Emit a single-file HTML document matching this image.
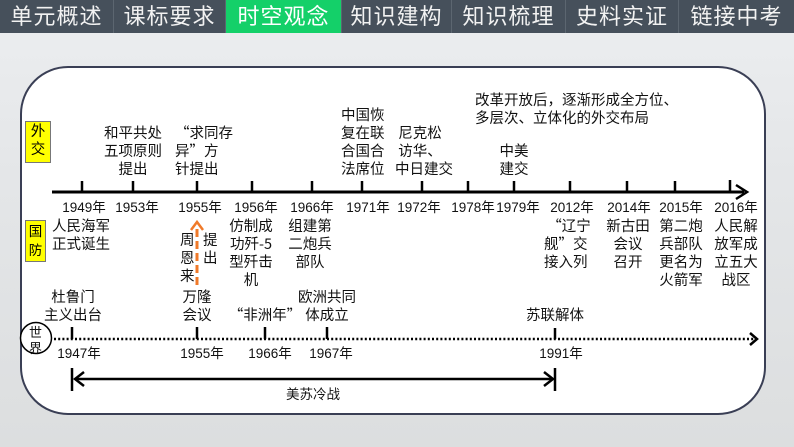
<!DOCTYPE html>
<html><head><meta charset="utf-8">
<style>
*{margin:0;padding:0;box-sizing:border-box}
body{width:794px;height:447px;overflow:hidden;position:relative;font-family:"Liberation Sans","Noto Sans CJK SC",sans-serif;background:linear-gradient(180deg,#eceef0 0%,#e4e6e8 40%,#dcdedf 100%)}
.tabs{position:absolute;left:0;top:0;width:794px;height:33px;background:#46505b;display:flex}
.tab{height:33px;color:#f2f2f2;font-size:22px;line-height:31px;text-align:center;border-right:1px solid #5c6670;font-family:"Noto Sans CJK SC",sans-serif;letter-spacing:1px}
.tab.on{background:#14d069;color:#fff}
.panel{position:absolute;left:20px;top:66px;width:746px;height:349px;background:#fff;border:2px solid #3a3f55;border-radius:48px}
.t{position:absolute;font-size:14.5px;line-height:18px;color:#111;white-space:nowrap;font-family:"Noto Sans CJK SC",sans-serif}
.c{transform:translateX(-50%);text-align:center}
.y{position:absolute;font-size:13.5px;line-height:16px;color:#111;white-space:nowrap;transform:translateX(-50%);font-family:"Liberation Sans","Noto Sans CJK SC",sans-serif}
.yb{position:absolute;background:#ffff00;border:1px solid #777;font-size:14.5px;line-height:18px;text-align:center;font-family:"Noto Sans CJK SC",sans-serif}
</style></head><body>
<div class="tabs">
<div class="tab" style="width:114px">单元概述</div>
<div class="tab" style="width:112px">课标要求</div>
<div class="tab on" style="width:116px">时空观念</div>
<div class="tab" style="width:110px">知识建构</div>
<div class="tab" style="width:114px">知识梳理</div>
<div class="tab" style="width:113px">史料实证</div>
<div class="tab" style="width:115px;border-right:none">链接中考</div>
</div>
<div class="panel"></div>
<svg style="position:absolute;left:0;top:0" width="794" height="447">
<g stroke="#000" stroke-width="3" fill="none">
<line x1="52" y1="192" x2="744" y2="192"/>
<polyline points="736,185 747,192 736,199" stroke-width="2.5"/>
</g>
<g stroke="#000" stroke-width="2.5">
<line x1="82" y1="181" x2="82" y2="192"/><line x1="133" y1="181" x2="133" y2="192"/><line x1="197" y1="181" x2="197" y2="192"/><line x1="252" y1="181" x2="252" y2="192"/><line x1="312" y1="181" x2="312" y2="192"/><line x1="362" y1="181" x2="362" y2="192"/><line x1="422" y1="181" x2="422" y2="192"/><line x1="468" y1="181" x2="468" y2="192"/><line x1="514" y1="181" x2="514" y2="192"/><line x1="570" y1="181" x2="570" y2="192"/><line x1="627" y1="181" x2="627" y2="192"/><line x1="675" y1="181" x2="675" y2="192"/><line x1="730" y1="180" x2="730" y2="192"/>
</g>
<line x1="54" y1="339" x2="754" y2="339" stroke="#000" stroke-width="2.5" stroke-dasharray="2,2.2"/>
<polyline points="750,333 757,339 750,345" stroke="#000" stroke-width="2.5" fill="none"/>
<g stroke="#000" stroke-width="2.5">
<line x1="72" y1="327" x2="72" y2="339"/><line x1="197" y1="327" x2="197" y2="339"/><line x1="265" y1="327" x2="265" y2="339"/><line x1="327" y1="327" x2="327" y2="339"/><line x1="555" y1="328" x2="555" y2="339"/>
</g>
<circle cx="36" cy="338" r="15.5" fill="#fff" stroke="#000" stroke-width="1.5"/>
<g stroke="#000" stroke-width="2.5" fill="none">
<line x1="72" y1="368" x2="72" y2="391"/><line x1="555" y1="368" x2="555" y2="391"/>
<line x1="75" y1="379" x2="553" y2="379"/>
<polyline points="84,372 75,379 84,386"/><polyline points="544,372 553,379 544,386"/>
</g>
<line x1="197" y1="285" x2="197" y2="228" stroke="#f07a2a" stroke-width="3" stroke-dasharray="8,4"/>
<polyline points="191,230 197,222 203,230" stroke="#f07a2a" stroke-width="2.5" fill="none"/>
</svg>
<div class="yb" style="left:25px;top:121px;width:26px;height:42px">外<br>交</div>
<div class="yb" style="left:25px;top:220px;width:21px;height:42px;font-size:13.5px;line-height:19px">国<br>防</div>
<div class="t" style="left:29px;top:324px;font-size:13px;line-height:16px">世<br>界</div>

<div class="t c" style="left:133px;top:124px">和平共处<br>五项原则<br>提出</div>
<div class="t" style="left:175px;top:124px">“求同存<br>异”方<br>针提出</div>
<div class="t" style="left:341px;top:106px">中国恢<br>复在联<br>合国合<br>法席位</div>
<div class="t" style="left:395px;top:124px">&nbsp;尼克松<br>&nbsp;访华、<br>中日建交</div>
<div class="t c" style="left:514px;top:142px">中美<br>建交</div>
<div class="t" style="left:475px;top:91px">改革开放后，逐渐形成全方位、<br>多层次、立体化的外交布局</div>

<div class="y" style="left:84px;top:200px">1949年</div>
<div class="y" style="left:137px;top:200px">1953年</div>
<div class="y" style="left:200px;top:200px">1955年</div>
<div class="y" style="left:256px;top:200px">1956年</div>
<div class="y" style="left:312px;top:200px">1966年</div>
<div class="y" style="left:368px;top:200px">1971年</div>
<div class="y" style="left:419px;top:200px">1972年</div>
<div class="y" style="left:473px;top:200px">1978年</div>
<div class="y" style="left:518px;top:200px">1979年</div>
<div class="y" style="left:572px;top:200px">2012年</div>
<div class="y" style="left:629px;top:200px">2014年</div>
<div class="y" style="left:681px;top:200px">2015年</div>
<div class="y" style="left:736px;top:200px">2016年</div>

<div class="t" style="left:52px;top:217px">人民海军<br>正式诞生</div>
<div class="t" style="left:180px;top:231px">周<br>恩<br>来</div>
<div class="t" style="left:203px;top:231px">提<br>出</div>
<div class="t c" style="left:251px;top:217px">仿制成<br>功歼-5<br>型歼击<br>机</div>
<div class="t c" style="left:310px;top:217px">组建第<br>二炮兵<br>部队</div>
<div class="t" style="left:544px;top:217px">&nbsp;“辽宁<br>舰”交<br>接入列</div>
<div class="t c" style="left:628px;top:217px">新古田<br>会议<br>召开</div>
<div class="t c" style="left:681px;top:217px">第二炮<br>兵部队<br>更名为<br>火箭军</div>
<div class="t c" style="left:736px;top:217px">人民解<br>放军成<br>立五大<br>战区</div>

<div class="t c" style="left:73px;top:288px">杜鲁门<br>主义出台</div>
<div class="t c" style="left:197px;top:288px">万隆<br>会议</div>
<div class="t c" style="left:265px;top:306px">“非洲年”</div>
<div class="t c" style="left:327px;top:288px">欧洲共同<br>体成立</div>
<div class="t c" style="left:555px;top:306px">苏联解体</div>

<div class="y" style="left:79px;top:346px">1947年</div>
<div class="y" style="left:202px;top:346px">1955年</div>
<div class="y" style="left:270px;top:346px">1966年</div>
<div class="y" style="left:331px;top:346px">1967年</div>
<div class="y" style="left:561px;top:346px">1991年</div>
<div class="t c" style="left:313px;top:384px;font-size:13.5px">美苏冷战</div>
</body></html>
